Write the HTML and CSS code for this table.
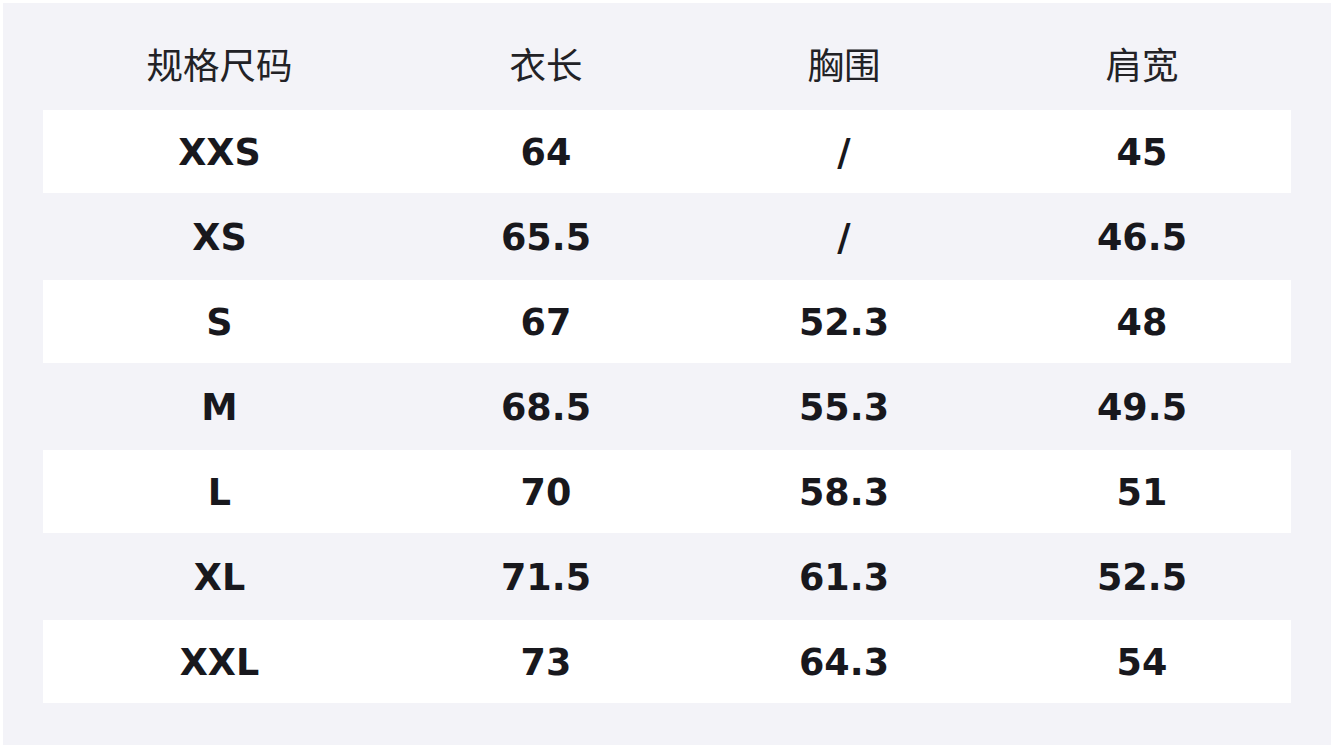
FILE: index.html
```html
<!DOCTYPE html>
<html lang="zh">
<head>
<meta charset="utf-8">
<title>尺码表</title>
<link rel="stylesheet" href="styles.css">
</head>
<body>
<div class="panel">
  <div class="row head">
    <div class="cell c1">规格尺码</div>
    <div class="cell">衣长</div>
    <div class="cell">胸围</div>
    <div class="cell">肩宽</div>
  </div>
  <div class="row odd"><div class="cell c1">XXS</div><div class="cell">64</div><div class="cell">/</div><div class="cell">45</div></div>
  <div class="row even"><div class="cell c1">XS</div><div class="cell">65.5</div><div class="cell">/</div><div class="cell">46.5</div></div>
  <div class="row odd"><div class="cell c1">S</div><div class="cell">67</div><div class="cell">52.3</div><div class="cell">48</div></div>
  <div class="row even"><div class="cell c1">M</div><div class="cell">68.5</div><div class="cell">55.3</div><div class="cell">49.5</div></div>
  <div class="row odd"><div class="cell c1">L</div><div class="cell">70</div><div class="cell">58.3</div><div class="cell">51</div></div>
  <div class="row even"><div class="cell c1">XL</div><div class="cell">71.5</div><div class="cell">61.3</div><div class="cell">52.5</div></div>
  <div class="row odd"><div class="cell c1">XXL</div><div class="cell">73</div><div class="cell">64.3</div><div class="cell">54</div></div>
</div>
</body>
</html>
```
FILE: styles.css
```css
html, body {
  margin: 0;
  background: #ffffff;
}
body {
  padding: 3px;
  width: 1328px;
}
.panel {
  background: #f3f3f8;
  height: 742px;
  box-sizing: border-box;
  padding: 20px 40px 0 40px;
  display: flex;
  flex-direction: column;
}
.row {
  display: grid;
  grid-template-columns: 354px 298px 298px 298px;
  align-items: center;
  box-sizing: border-box;
}
.cell {
  text-align: center;
  font-family: "DejaVu Sans", "Noto Sans CJK SC", sans-serif;
  font-weight: bold;
  font-size: 36.5px;
  color: #18181d;
}
.head {
  height: 87px;
  padding-bottom: 6px;
}
.head .cell {
  font-family: "Noto Sans CJK SC", sans-serif;
  font-weight: normal;
  font-size: 36.5px;
  color: #222226;
}
.c1 {
  padding-right: 1px;
}
.odd {
  background: #ffffff;
  height: 83px;
  padding-top: 2px;
}
.even {
  height: 87px;
  padding-top: 2px;
}
```
